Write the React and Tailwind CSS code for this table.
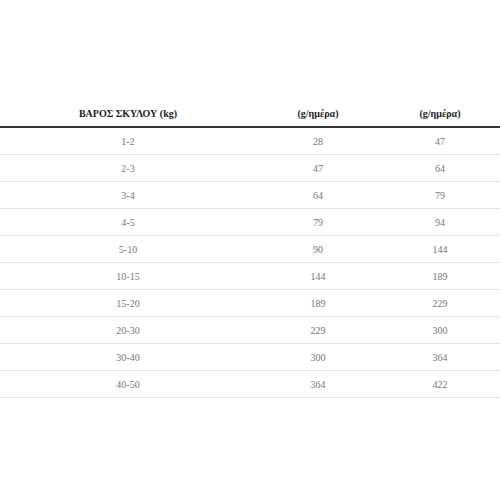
import React from 'react';

const ROWS = [
  ['1-2', '28', '47'],
  ['2-3', '47', '64'],
  ['3-4', '64', '79'],
  ['4-5', '79', '94'],
  ['5-10', '90', '144'],
  ['10-15', '144', '189'],
  ['15-20', '189', '229'],
  ['20-30', '229', '300'],
  ['30-40', '300', '364'],
  ['40-50', '364', '422'],
];

const App = () => {
  return (
    <div className="w-[500px] h-[500px] bg-white pt-[100px] font-['Liberation_Serif',serif] text-[10px]">
      {/* Header */}
      <div className="grid grid-cols-[256px_124px_120px] h-[28px] border-b-2 border-[#333] font-bold text-[#222]">
        <div className="flex items-center justify-center">ΒΑΡΟΣ ΣΚΥΛΟΥ (kg)</div>
        <div className="flex items-center justify-center">(g/ημέρα)</div>
        <div className="flex items-center justify-center">(g/ημέρα)</div>
      </div>

      {/* Rows */}
      {ROWS.map((r, i) => (
        <div key={i} className="grid grid-cols-[256px_124px_120px] h-[27px] border-b border-[#e6e6e6] text-[#777]">
          <div className="flex items-center justify-center">{r[0]}</div>
          <div className="flex items-center justify-center">{r[1]}</div>
          <div className="flex items-center justify-center">{r[2]}</div>
        </div>
      ))}
    </div>
  );
};

export default App;
